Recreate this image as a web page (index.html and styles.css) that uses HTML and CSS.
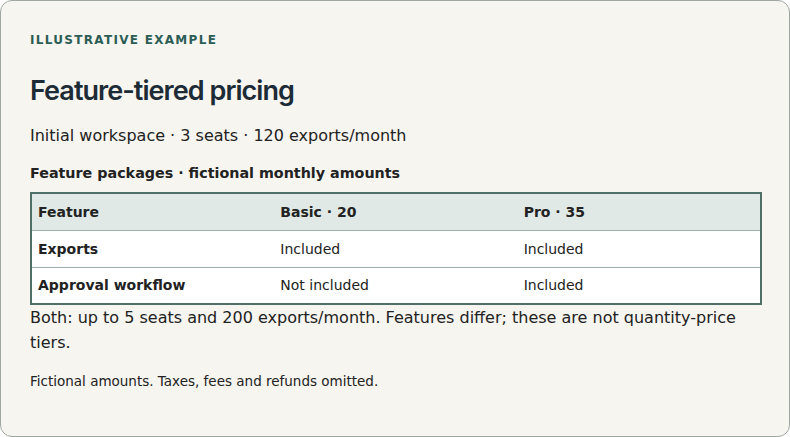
FILE: index.html
```html
<!DOCTYPE html>
<html lang="en">
<head>
  <meta charset="UTF-8">
  <title>Feature-tiered pricing</title>
  <link rel="stylesheet" href="styles.css">
</head>
<body>
  <div class="card">
    <div class="eyebrow">Illustrative example</div>
    <h1 class="title">Feature-tiered pricing</h1>
    <p class="start">Initial workspace · 3 seats · 120 exports/month</p>
    <div class="caption">Feature packages · fictional monthly amounts</div>
    <table class="plans">
      <tr>
        <th>Feature</th>
        <th>Basic · 20</th>
        <th>Pro · 35</th>
      </tr>
      <tr>
        <th>Exports</th>
        <td>Included</td>
        <td>Included</td>
      </tr>
      <tr>
        <th>Approval workflow</th>
        <td>Not included</td>
        <td>Included</td>
      </tr>
    </table>
    <p class="note">Both: up to 5 seats and 200 exports/month. Features differ; these are not quantity-price tiers.</p>
    <p class="small">Fictional amounts. Taxes, fees and refunds omitted.</p>
  </div>
</body>
</html>
```

FILE: styles.css
```css
* {
  box-sizing: border-box;
  margin: 0;
  padding: 0;
}
body {
  font-family: 'DejaVu Sans', sans-serif;
  color: #222;
  background: #fff;
}
.card {
  height: 437px;
  border: 1px solid #9ea8a3;
  border-radius: 12px;
  background: #f6f5f0;
  padding: 32px 28px 20px 29px;
}
.eyebrow {
  font-size: 12px;
  line-height: 14px;
  font-weight: bold;
  text-transform: uppercase;
  letter-spacing: 1.3px;
  color: #2c5d55;
}
.title {
  font-family: 'Inter', sans-serif;
  font-size: 27px;
  line-height: 32px;
  font-weight: 600;
  letter-spacing: -0.95px;
  color: #1d2b36;
  margin-top: 28px;
}
.start {
  font-size: 16px;
  line-height: 20px;
  margin-top: 19px;
}
.caption {
  font-size: 14.3px;
  line-height: 18px;
  font-weight: bold;
  margin-top: 18px;
}
.plans {
  width: 732px;
  margin-top: 10px;
  border-collapse: collapse;
  border: 2px solid #4f6f68;
  background: #fff;
  font-size: 14px;
  table-layout: fixed;
}
.plans th,
.plans td {
  text-align: left;
  padding: 0 6px;
  height: 37px;
  border-top: 1px solid #9ab0a8;
}
.plans th {
  font-weight: bold;
}
.plans tr:first-child th {
  background: #e0e9e5;
  border-top: none;
}
.note {
  font-size: 16px;
  line-height: 25px;
  margin-top: 0;
}
.small {
  font-size: 13.5px;
  margin-top: 18px;
}
```
